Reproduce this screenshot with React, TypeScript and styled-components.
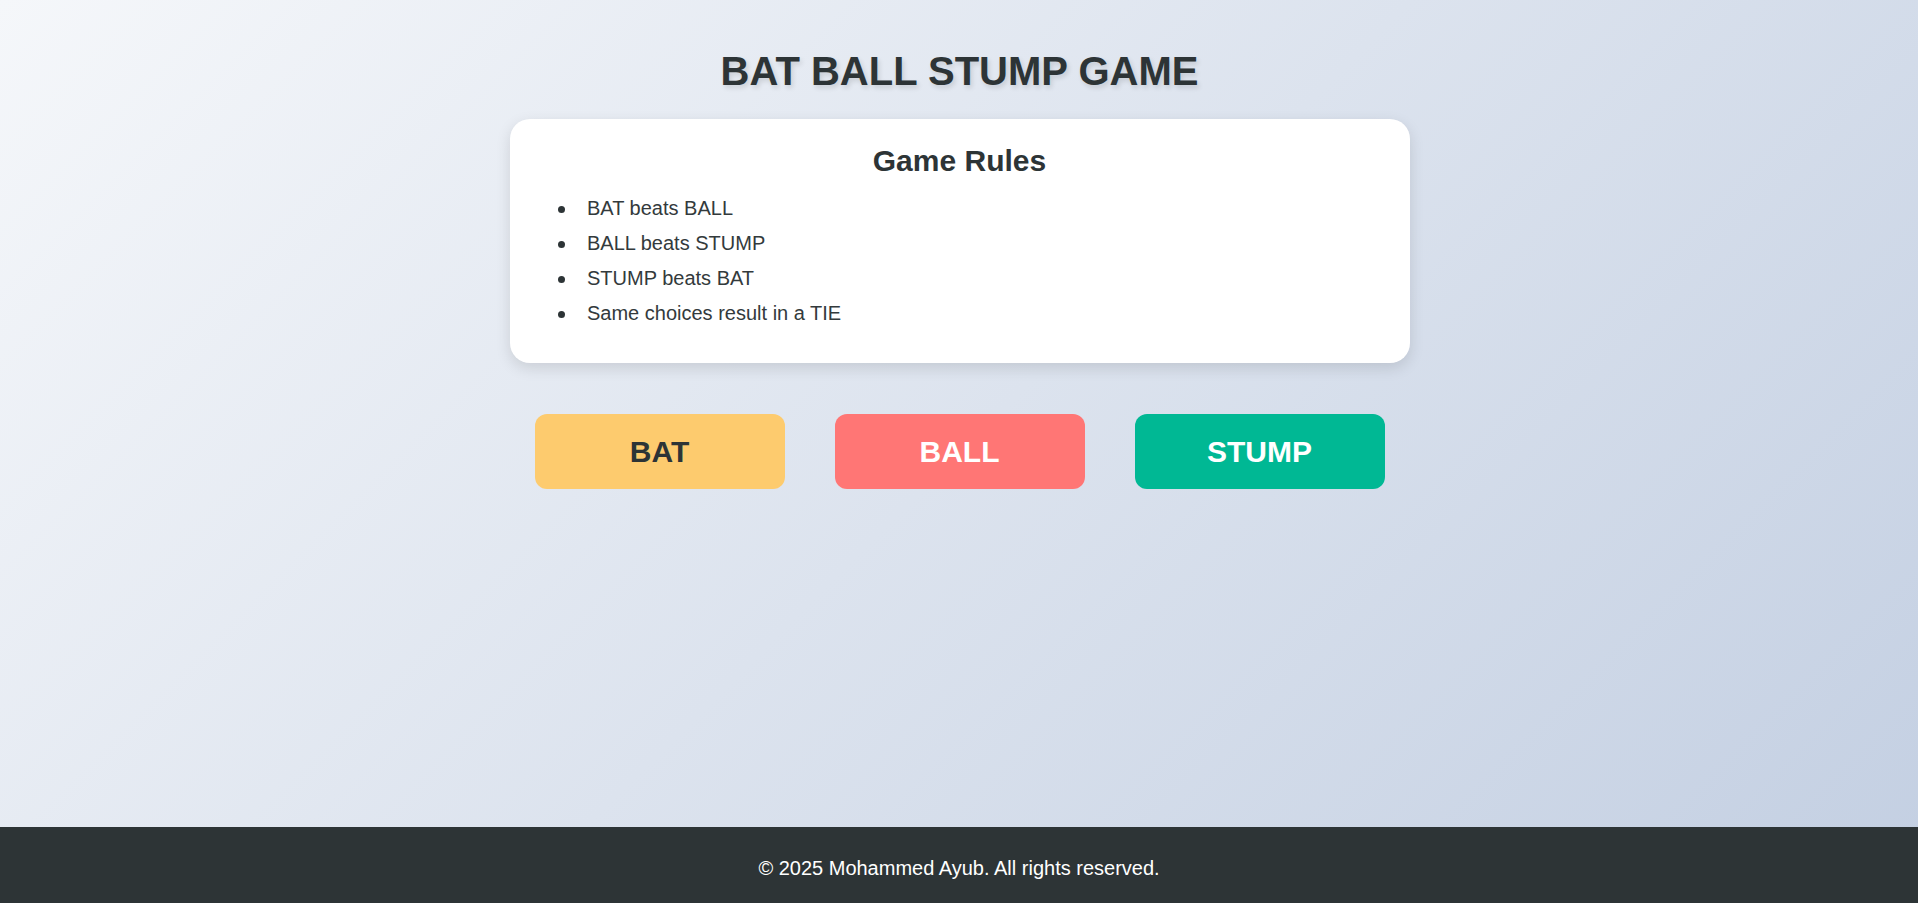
import React from "react";
import styled, { createGlobalStyle } from "styled-components";

const GlobalStyle = createGlobalStyle`
  * { box-sizing: border-box; }
  html, body { margin: 0; padding: 0; }
  body {
    font-family: "Liberation Sans", Arial, sans-serif;
    background: linear-gradient(135deg, #f5f7fa 0%, #c3cfe2 100%);
    min-height: 100vh;
    color: #2d3436;
  }
`;

const Page = styled.div`
  min-height: 100vh;
  display: flex;
  flex-direction: column;
`;

const Main = styled.main`
  flex: 1;
  display: flex;
  flex-direction: column;
  align-items: center;
  padding-top: 48px;
  padding-left: 1px;
`;

const Title = styled.h1`
  margin: 0 0 25px;
  font-size: 40px;
  line-height: 46px;
  font-weight: 700;
  color: #2d3436;
  text-shadow: 2px 3px 5px rgba(0, 0, 0, 0.12);
`;

const RulesCard = styled.section`
  width: 900px;
  background: #ffffff;
  border-radius: 20px;
  padding: 25px 30px 25px;
  box-shadow: 0 5px 15px rgba(0, 0, 0, 0.12);
`;

const RulesHeading = styled.h2`
  margin: 0 0 13px;
  text-align: center;
  font-size: 30px;
  line-height: 34px;
  font-weight: 700;
  color: #2d3436;
`;

const RulesList = styled.ul`
  margin: 0 0 7px;
  padding-left: 18px;
  list-style: none;
`;

const RuleItem = styled.li`
  display: flex;
  align-items: center;
  gap: 22.5px;
  font-size: 20px;
  line-height: 35px;
  color: #333a3c;

  &::before {
    content: "";
    flex: none;
    width: 7px;
    height: 7px;
    border-radius: 50%;
    background: #2d3436;
    margin-top: 1px;
  }
`;

const ChoiceRow = styled.div`
  display: flex;
  justify-content: center;
  gap: 50px;
  margin-top: 51px;
`;

const ChoiceButton = styled.button<{ $bg: string; $fg: string }>`
  width: 250px;
  height: 75px;
  border: none;
  border-radius: 12px;
  background: ${(p) => p.$bg};
  color: ${(p) => p.$fg};
  font-family: "Liberation Sans", Arial, sans-serif;
  font-size: 30px;
  font-weight: 700;
  cursor: pointer;
  padding: 0;
`;

const Footer = styled.footer`
  background: #2d3436;
  color: #ffffff;
  text-align: center;
  height: 76px;
  padding-top: 29px;
  font-size: 20px;
  line-height: 24px;
`;

const rules = [
  "BAT beats BALL",
  "BALL beats STUMP",
  "STUMP beats BAT",
  "Same choices result in a TIE",
];

const choices = [
  { label: "BAT", bg: "#fdcb6e", fg: "#2d3436" },
  { label: "BALL", bg: "#ff7675", fg: "#ffffff" },
  { label: "STUMP", bg: "#00b894", fg: "#ffffff" },
];

export default function App() {
  return (
    <>
      <GlobalStyle />
      <Page>
        <Main>
          <Title>BAT BALL STUMP GAME</Title>
          <RulesCard>
            <RulesHeading>Game Rules</RulesHeading>
            <RulesList>
              {rules.map((r) => (
                <RuleItem key={r}>{r}</RuleItem>
              ))}
            </RulesList>
          </RulesCard>
          <ChoiceRow>
            {choices.map((c) => (
              <ChoiceButton key={c.label} $bg={c.bg} $fg={c.fg}>
                {c.label}
              </ChoiceButton>
            ))}
          </ChoiceRow>
        </Main>
        <Footer>© 2025 Mohammed Ayub. All rights reserved.</Footer>
      </Page>
    </>
  );
}
